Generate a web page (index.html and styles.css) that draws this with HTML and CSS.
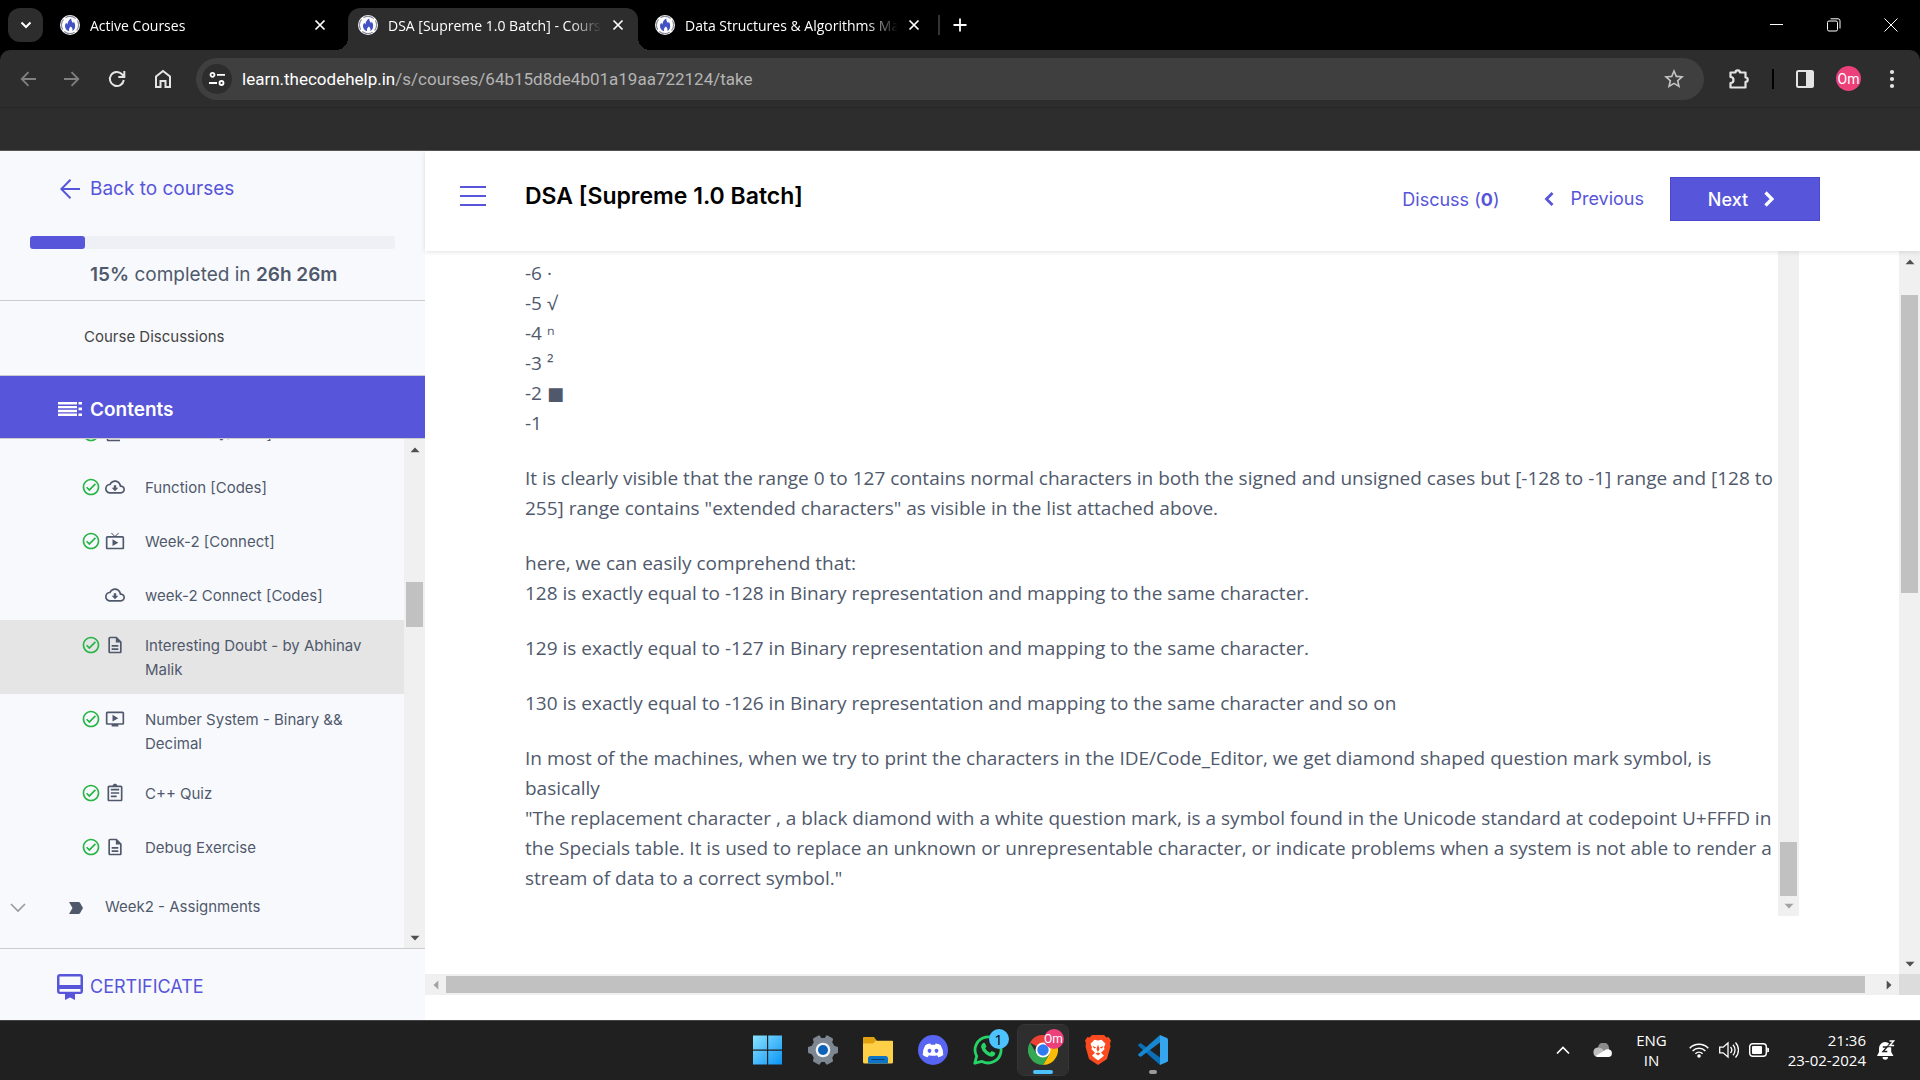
FILE: index.html
```html
<!DOCTYPE html>
<html lang="en">
<head>
<meta charset="utf-8">
<title>DSA [Supreme 1.0 Batch] - Course</title>
<link rel="stylesheet" href="styles.css">
</head>
<body>
<svg class="defs" aria-hidden="true">
  <symbol id="flame" viewBox="0 0 20 20"><circle cx="10" cy="10" r="10" fill="#fff"/><circle cx="10" cy="10" r="8.6" fill="none" stroke="#8a8d9c" stroke-width="1.2" stroke-dasharray="11 2.500" stroke-dashoffset="5"/><path d="M11.300 3.500c-.2 2.400 1 3.200 1.700 4.600.5-.4.700-1 .6-1.700 1.600 2 2 4.600 1.200 6.800-.5 1.300-1.300 2.300-2.400 2.900.5-1.600 0-3-1.600-4.500-1.600 1.300-2.300 2.800-1.700 4.700-2.500-.8-4.300-3-4.100-5.500.1-1.300.7-2.300 1.500-3 .1.800.4 1.300.9 1.700.1-2.600 1.500-4.800 3.900-6z" fill="#4252c4"/></symbol>
  <symbol id="x" viewBox="0 0 12 12"><path d="M1.500 1.500l9 9M10.500 1.500l-9 9" stroke="currentColor" stroke-width="1.700" fill="none"/></symbol>
  <symbol id="check" viewBox="0 0 24 24"><path fill="#28b446" d="M16.590 7.580L10 14.170l-2.590-2.580L6 13l4 4 8-8zM12 2C6.480 2 2 6.480 2 12s4.480 10 10 10 10-4.480 10-10S17.520 2 12 2zm0 18c-4.420 0-8-3.580-8-8s3.580-8 8-8 8 3.580 8 8-3.580 8-8 8z"/></symbol>
  <symbol id="cloud" viewBox="0 0 24 24"><path fill="currentColor" d="M19.350 10.040C18.670 6.590 15.640 4 12 4 9.110 4 6.600 5.640 5.350 8.040 2.340 8.360 0 10.910 0 14c0 3.310 2.690 6 6 6h13c2.760 0 5-2.240 5-5 0-2.640-2.050-4.780-4.650-4.960zM19 18H6c-2.210 0-4-1.790-4-4 0-2.050 1.530-3.760 3.560-3.970l1.070-.11.5-.95C8.080 7.140 9.940 6 12 6c2.620 0 4.880 1.860 5.390 4.430l.3 1.500 1.530.11c1.560.1 2.780 1.410 2.780 2.960 0 1.650-1.350 3-3 3zm-5.550-8h-2.900v3H8l4 4 4-4h-2.550z"/></symbol>
  <symbol id="live" viewBox="0 0 24 24"><path fill="currentColor" d="M21 6h-7.590l3.290-3.290L16 2l-4 4-4-4-.7.710L10.590 6H3c-1.100 0-2 .89-2 2v12c0 1.100.9 2 2 2h18c1.100 0 2-.9 2-2V8c0-1.110-.9-2-2-2zm0 14H3V8h18v12zM9 10v8l7-4z"/></symbol>
  <symbol id="video" viewBox="0 0 24 24"><path fill="currentColor" d="M21 3H3c-1.110 0-2 .89-2 2v12c0 1.100.89 2 2 2h5v2h8v-2h5c1.100 0 2-.9 2-2V5c0-1.110-.9-2-2-2zm0 14H3V5h18v12zm-5-6l-7 4V7z"/></symbol>
  <symbol id="doc" viewBox="0 0 24 24"><path fill="currentColor" d="M8 16h8v2H8zm0-4h8v2H8zm6-10H6c-1.100 0-2 .9-2 2v16c0 1.100.89 2 1.990 2H18c1.100 0 2-.9 2-2V8l-6-6zm4 18H6V4h7v5h5v11z"/></symbol>
  <symbol id="slides" viewBox="0 0 24 24"><path fill="currentColor" d="M20 2H8c-1.100 0-2 .9-2 2v12c0 1.100.9 2 2 2h12c1.100 0 2-.9 2-2V4c0-1.100-.9-2-2-2zm0 14H8V4h12v12zM4 6H2v14c0 1.100.9 2 2 2h14v-2H4V6z"/></symbol>
  <symbol id="quiz" viewBox="0 0 24 24"><path fill="currentColor" d="M7 15h7v2H7zm0-4h10v2H7zm0-4h10v2H7zm12-4h-4.180C14.400 1.840 13.300 1 12 1s-2.400.84-2.820 2H5c-1.100 0-2 .9-2 2v15c0 1.100.9 2 2 2h14c1.100 0 2-.9 2-2V5c0-1.100-.9-2-2-2zm0 17H5V5h14v15z"/></symbol>
  <symbol id="tri" viewBox="0 0 10 6"><path fill="currentColor" d="M5 0.500l4.500 4.800h-9z"/></symbol>
</svg>

<header class="browser">
  <div class="tabstrip">
    <button class="tabsearch" aria-label="Search tabs"><svg width="12" height="8" viewBox="0 0 12 8"><path d="M1.500 1.500L6 6l4.500-4.500" fill="none" stroke="#fff" stroke-width="2"/></svg></button>
    <div class="tab"><svg class="fav"><use href="#flame"/></svg><span class="tabname">Active Courses</span><button aria-label="Close tab"><svg class="tabx"><use href="#x"/></svg></button></div>
    <div class="tab active"><svg class="fav"><use href="#flame"/></svg><span class="tabname">DSA [Supreme 1.0 Batch] - Course</span><button aria-label="Close tab"><svg class="tabx"><use href="#x"/></svg></button></div>
    <div class="tab"><svg class="fav"><use href="#flame"/></svg><span class="tabname">Data Structures &amp; Algorithms Mastery</span><button aria-label="Close tab"><svg class="tabx"><use href="#x"/></svg></button></div>
    <span class="tabsep"></span>
    <button class="newtab" aria-label="New tab"><svg width="14" height="14" viewBox="0 0 14 14"><path d="M7 0.500v13M0.500 7h13" stroke="#fff" stroke-width="1.800"/></svg></button>
    <div class="winctl">
      <button aria-label="Minimise"><svg width="14" height="14" viewBox="0 0 14 14"><path d="M0 6.500h13" stroke="#fff"/></svg></button>
      <button aria-label="Restore"><svg width="14" height="14" viewBox="0 0 14 14" fill="none" stroke="#fff"><rect x="0.500" y="3" width="10" height="10" rx="1.500"/><path d="M3.500 0.800h7.500q2 0 2 2V10.500"/></svg></button>
      <button aria-label="Close"><svg width="14" height="14" viewBox="0 0 14 14"><path d="M0.500 0.500l13 13M13.500 0.500l-13 13" stroke="#fff"/></svg></button>
    </div>
  </div>
  <div class="toolbar">
    <button class="dim" aria-label="Back"><svg width="16" height="16" viewBox="0 0 16 16" fill="none" stroke="currentColor" stroke-width="1.800"><path d="M16 8H2M8.500 1.200L1.700 8l6.800 6.800"/></svg></button>
    <button class="dim" aria-label="Forward"><svg width="16" height="16" viewBox="0 0 16 16" fill="none" stroke="currentColor" stroke-width="1.800"><path d="M0 8h14M7.500 1.200L14.300 8l-6.800 6.800"/></svg></button>
    <button aria-label="Reload"><svg width="18" height="18" viewBox="0 0 18 18" fill="none" stroke="currentColor" stroke-width="2"><path d="M15.800 10A7 7 0 1 1 14 4.200L16 6.200M16.300 1v6h-6"/></svg></button>
    <button aria-label="Home"><svg width="18" height="20" viewBox="0 0 18 20" fill="none" stroke="currentColor" stroke-width="2"><path d="M2 7.500L9 2l7 5.500V18h-4.500v-6h-5v6H2z"/></svg></button>
    <div class="omnibox">
      <button class="site" aria-label="Site information"><svg width="16" height="16" viewBox="0 0 16 16" fill="none" stroke="#fff" stroke-width="1.800"><circle cx="3.500" cy="3.800" r="2"/><path d="M8 3.800h8M0 12h8"/><circle cx="12.500" cy="12" r="2"/></svg></button>
      <span class="url" role="textbox" aria-label="Address"><b>learn.thecodehelp.in</b>/s/courses/64b15d8de4b01a19aa722124/take</span>
      <button class="star" aria-label="Bookmark"><svg width="20" height="20" viewBox="2 2 20 20"><path fill="currentColor" d="M22 9.240l-7.190-.62L12 2 9.190 8.630 2 9.240l5.460 4.730L5.820 21 12 17.270 18.180 21l-1.630-7.030L22 9.240zM12 15.400l-3.760 2.270 1-4.280-3.320-2.880 4.380-.38L12 6.100l1.710 4.040 4.380.38-3.320 2.880 1 4.280L12 15.400z"/></svg></button>
    </div>
    <div class="exts">
      <button aria-label="Extensions"><svg width="22" height="22" viewBox="0 0 22 22"><path d="M2.500 4.500h5a2.200 2.200 0 0 1 4.400 0h5.600v5a2.200 2.200 0 0 1 0 4.400V19.500H2.500v-4.500a3 3 0 0 0 0-6z" fill="none" stroke="currentColor" stroke-width="2.200" stroke-linejoin="round"/></svg></button>
      <span class="extsep"></span>
      <button aria-label="Side panel"><svg width="18" height="18" viewBox="0 0 18 18"><rect x="1" y="1" width="16" height="16" rx="1.500" fill="none" stroke="currentColor" stroke-width="2"/><path fill="currentColor" d="M10 1h7v16h-7z"/></svg></button>
      <button class="avatar">Om</button>
      <button class="menu" aria-label="Menu"><svg width="6" height="20" viewBox="0 0 6 20" fill="currentColor"><circle cx="3" cy="3" r="2.100"/><circle cx="3" cy="10" r="2.100"/><circle cx="3" cy="17" r="2.100"/></svg></button>
    </div>
  </div>
  <div class="bookmarks"></div>
</header>

<div class="page">
  <aside class="sidebar">
    <div class="progress">
      <a class="back" href="#"><svg width="20" height="20" viewBox="0 0 20 20" fill="none" stroke="currentColor" stroke-width="2"><path d="M20 10H1.500M10.500 0.800L1.300 10l9.200 9.200"/></svg>Back to courses</a>
      <div class="bar"><div class="fill" style="width:15%"></div></div>
      <p class="done"><b>15%</b> completed in <b>26h 26m</b></p>
    </div>
    <a class="disc" href="#">Course Discussions</a>
    <h2 class="contents"><svg width="24" height="14" viewBox="0 0 24 14" fill="#fff"><path d="M0 0h19v2.400H0zM0 3.900h19v2.400H0zM0 7.800h19v2.400H0zM0 11.600h19V14H0zM20.500 0H24v2.600h-3.500zM20.500 5.500H24v2.800h-3.500zM20.500 11.400H24V14h-3.500z"/></svg>Contents</h2>
    <div class="listwrap">
      <ul class="list">
        <li><svg><use href="#check"/></svg><svg><use href="#slides"/></svg><a href="#">Functions [Slides]</a></li>
        <li><svg><use href="#check"/></svg><svg><use href="#cloud"/></svg><a href="#">Function [Codes]</a></li>
        <li><svg><use href="#check"/></svg><svg><use href="#live"/></svg><a href="#">Week-2 [Connect]</a></li>
        <li class="todo"><span></span><svg><use href="#cloud"/></svg><a href="#">week-2 Connect [Codes]</a></li>
        <li class="current"><svg><use href="#check"/></svg><svg><use href="#doc"/></svg><a href="#">Interesting Doubt - by Abhinav Malik</a></li>
        <li><svg><use href="#check"/></svg><svg><use href="#video"/></svg><a href="#">Number System - Binary &amp;&amp; Decimal</a></li>
        <li><svg><use href="#check"/></svg><svg><use href="#quiz"/></svg><a href="#">C++ Quiz</a></li>
        <li><svg><use href="#check"/></svg><svg><use href="#doc"/></svg><a href="#">Debug Exercise</a></li>
        <li class="section"><svg width="16" height="10" viewBox="0 0 16 10"><path d="M1 1l7 7 7-7" fill="none" stroke="#9a9a9a" stroke-width="1.600"/></svg><svg width="14" height="12" viewBox="0 0 14 12"><path d="M0 0h9.500q1 0 1.500.8L14 6l-3 5.200q-.5.800-1.500.8H0l3.500-6z" fill="currentColor"/></svg><a href="#">Week2 - Assignments</a></li>
      </ul>
      <div class="vbar listbar"><svg class="arr"><use href="#tri"/></svg><i></i><svg class="arr down"><use href="#tri"/></svg></div>
    </div>
    <a class="cert" href="#"><svg width="26" height="26" viewBox="0 0 26 26"><path fill="currentColor" fill-rule="evenodd" d="M3 0h20a3 3 0 0 1 3 3v14a3 3 0 0 1-3 3h-5v6l-5-2.500L8 26v-6H3a3 3 0 0 1-3-3V3a3 3 0 0 1 3-3zM2.500 2.500v8.500h21V2.500zM2.500 15v2.800h21V15z"/></svg>CERTIFICATE</a>
  </aside>

  <main class="main">
    <div class="head">
      <button class="burger" aria-label="Toggle menu"><i></i><i></i><i></i></button>
      <h1>DSA [Supreme 1.0 Batch]</h1>
      <a class="discuss" href="#">Discuss (<b>0</b>)</a>
      <a class="prev" href="#"><svg width="10" height="14" viewBox="0 0 10 14"><path d="M8.500 1L2.500 7l6 6" fill="none" stroke="currentColor" stroke-width="2.800"/></svg>Previous</a>
      <button class="next">Next<svg width="10" height="16" viewBox="0 0 10 16"><path d="M1.500 1.500L8 8l-6.500 6.500" fill="none" stroke="currentColor" stroke-width="3.200"/></svg></button>
    </div>
    <div class="frame">
      <div class="view">
        <article class="article">
          <p>-6 ·<br>-5 √<br>-4 ⁿ<br>-3 ²<br>-2 <span class="block">■</span><br>-1</p>
          <p>It is clearly visible that the range 0 to 127 contains normal characters in both the signed and unsigned cases but [-128 to -1] range and [128 to 255] range contains "extended characters" as visible in the list attached above.</p>
          <p>here, we can easily comprehend that:<br>128 is exactly equal to -128 in Binary representation and mapping to the same character.</p>
          <p>129 is exactly equal to -127 in Binary representation and mapping to the same character.</p>
          <p>130 is exactly equal to -126 in Binary representation and mapping to the same character and so on</p>
          <p>In most of the machines, when we try to print the characters in the IDE/Code_Editor, we get diamond shaped question mark symbol, is basically<br>"The replacement character , a black diamond with a white question mark, is a symbol found in the Unicode standard at codepoint U+FFFD in the Specials table. It is used to replace an unknown or unrepresentable character, or indicate problems when a system is not able to render a stream of data to a correct symbol."</p>
        </article>
        <div class="vbar innerbar"><i></i><svg class="arr down grey"><use href="#tri"/></svg></div>
      </div>
      <div class="vbar outerbar"><svg class="arr"><use href="#tri"/></svg><i></i><svg class="arr down"><use href="#tri"/></svg></div>
      <div class="hbar"><svg class="arr left grey"><use href="#tri"/></svg><i></i><svg class="arr right"><use href="#tri"/></svg></div>
      <div class="corner"></div>
    </div>
  </main>
</div>

<footer class="taskbar">
  <span></span>
  <nav class="apps">
    <button aria-label="Start"><svg width="30" height="30" viewBox="0 0 30 30"><defs><linearGradient id="w" x1="0" y1="0" x2="1" y2="1"><stop offset="0" stop-color="#8be3ff"/><stop offset="1" stop-color="#0a94f5"/></linearGradient></defs><path fill="url(#w)" d="M0 0.500h14v14H0zM15.200 0.500H29v14H15.200zM0 15.700h14V29.500H0zM15.200 15.700H29V29.500H15.200z"/></svg></button>
    <button aria-label="Settings"><svg width="30" height="30" viewBox="0 0 30 30"><path fill="#7d8791" stroke="#7d8791" stroke-width="2" stroke-linejoin="round" d="M12.800 4l-1.800-2.600L6 4.200l.8 3.300-2.500 4.300L1 12.800v4.400l3.300 1L6.800 22.500 6 25.800l5 2.800L12.800 26h4.400l1.800 2.600 5-2.800-.8-3.300 2.500-4.300 3.300-1v-4.400l-3.300-1-2.500-4.300.8-3.300-5-2.800L17.200 4z"/><circle cx="15" cy="15" r="7.300" fill="#f2f4f6"/><circle cx="15" cy="15" r="5" fill="#0c62b8"/></svg></button>
    <button aria-label="File Explorer"><svg width="30" height="28" viewBox="0 0 30 28"><path fill="#e0a010" d="M0 2q0-1 1-1h10l3 4H30v5H0z"/><path fill="#ffcf48" d="M0 7.500h10l3-2.800h16q1 0 1 1V26q0 1.500-1.500 1.500h-27Q0 27.500 0 26z"/><path fill="#0d74c8" d="M5 27.500v-5q0-2.500 2.500-2.500h15q2.500 0 2.500 2.500v5z"/><path stroke="#083f75" d="M8.500 23.500h13"/></svg></button>
    <button aria-label="Discord"><svg width="30" height="30" viewBox="0 0 30 30"><circle cx="15" cy="15" r="15" fill="#5865f2"/><path fill="#fff" d="M12.300 8.500q-3 .3-5 1.800-2.800 4.700-2.600 9.700 2.500 2 5 2.300l1.200-2q4.100 1 8.200 0l1.200 2q2.500-.4 5-2.300.2-5-2.600-9.700-2-1.500-5-1.800l-.7 1.300h-4z"/><ellipse cx="11.500" cy="15.800" rx="1.900" ry="2.100" fill="#5865f2"/><ellipse cx="18.500" cy="15.800" rx="1.900" ry="2.100" fill="#5865f2"/></svg></button>
    <button class="badged" aria-label="WhatsApp"><svg width="30" height="30" viewBox="0 0 30 30"><path d="M1.800 28.200l1.900-7A13 13 0 1 1 9 26.400z" fill="#202020" stroke="#25d366" stroke-width="2.800" stroke-linejoin="round"/><path fill="#25d366" d="M9.500 8.500q1-1 2.300-.5l1.700 3.500-1.300 1.800q1.500 3 4.800 4.500l1.800-1.700 3.500 1.700q0 3-2.800 3.800-3 .5-6.500-2.300-4.200-3.300-4.900-7-.1-2.500 1.400-3.800z"/></svg><b class="count">1</b></button>
    <button class="badged open" aria-label="Chrome"><svg width="30" height="30" viewBox="0 0 30 30"><path fill="#ea4335" d="M15 15L2 7.500A15 15 0 0 1 28 7.500H15z"/><path fill="#fbbc05" d="M28 7.500A15 15 0 0 1 15 30L21.500 18.700 15 7.500z"/><path fill="#34a853" d="M2 7.500A15 15 0 0 0 15 30l6.500-11.300H8.500z"/><circle cx="15" cy="15" r="7.500" fill="#fff"/><circle cx="15" cy="15" r="5.700" fill="#2f7bf0"/></svg><b class="profile">Om</b></button>
    <button aria-label="Brave"><svg width="26" height="30" viewBox="0 0 26 30"><path fill="#fb4a1f" d="M7 0h12l2.500 2.500 2-.5L26 5.500l-1 3 .5 3L22 24l-9 6-9-6L.5 11.500l.5-3-1-3L2.500 2l2 .5z"/><path fill="#fff" d="M13 5.500l3.500-.8 4 4-1.500 3.500.5 2-3.500 3.500 3 3L13 25.500 7 20.700l3-3-3.500-3.500.5-2L5.500 8.700l4-4z"/><path fill="#fb4a1f" d="M13 9.500l1.500 4.500-1.500 3-1.500-3zM7.500 11l4 1.500-2.500 1zM18.500 11l-4 1.500 2.500 1zM10.500 18.500l2.500-1 2.500 1-2.500 2z"/></svg></button>
    <button class="running" aria-label="Visual Studio Code"><svg width="30" height="30" viewBox="0 0 30 30"><path fill="#0a6fb8" d="M2.500 8L22 22.500V30L0.500 11q-.6-.8 0-1.500z"/><path fill="#1787d0" d="M2.500 22L22 7.500V0L0.500 19q-.6.800 0 1.500z"/><path fill="#35a5ee" d="M22 0l7 3q1 .5 1 1.500v21q0 1-1 1.500l-7 3z"/></svg></button>
  </nav>
  <div class="tray">
    <button aria-label="Hidden icons"><svg width="14" height="9" viewBox="0 0 14 9"><path d="M1 7.500l6-6 6 6" fill="none" stroke="#fff" stroke-width="1.700"/></svg></button>
    <svg class="onedrive" width="20" height="14" viewBox="0 0 20 14"><path fill="#8b8b8b" d="M5 5a5.500 5.500 0 0 1 11 0v5H5z"/><path fill="#bdbdbd" d="M4.500 4.500q2.500-.5 5 1.500l3 5-8 3A4.800 4.800 0 0 1 4.500 4.500z"/><path fill="#fff" d="M2.500 13l9-5.500q1.500-1.500 4-1.300a4 4 0 0 1 .5 7.800H4.500z"/></svg>
    <div class="lang">ENG<br>IN</div>
    <div class="status">
      <svg width="20" height="16" viewBox="0 0 20 16" fill="none" stroke="#fff" stroke-width="1.500"><path d="M0.700 6.200a13 13 0 0 1 18.600 0M3.600 9a9 9 0 0 1 12.800 0M6.400 11.800a5.200 5.200 0 0 1 7.200 0"/><circle cx="10" cy="14" r="1.800" fill="#fff" stroke="none"/></svg>
      <svg width="20" height="18" viewBox="0 0 20 18" fill="none" stroke="#fff" stroke-width="1.300"><path d="M0.700 6.200h3.500L9 2v14l-4.800-4.200H.7zM11.500 6a4.500 4.500 0 0 1 0 6M14 3.700a8 8 0 0 1 0 10.600M16.500 1.500a11 11 0 0 1 0 15"/></svg>
      <svg width="20" height="14" viewBox="0 0 20 14"><rect x="0.700" y="0.700" width="16.600" height="12.600" rx="3" fill="none" stroke="#fff" stroke-width="1.400"/><rect x="3" y="3" width="10" height="8" rx="1" fill="#fff"/><path d="M18.200 4.500L20 5.300v3.400l-1.800.8z" fill="#fff"/></svg>
    </div>
    <div class="clock">21:36<br>23-02-2024</div>
    <svg width="18" height="20" viewBox="0 0 18 20"><path fill="#fff" d="M8 2a6.200 6.200 0 0 1 6.200 6.200V12L16.500 16H0l2-4V8.200A6.200 6.200 0 0 1 8 2zM5.500 17h5.500a2.700 2.700 0 0 1-5.500 0z"/><path d="M5.800 7h4.200L6 11.500h4.300" fill="none" stroke="#202020" stroke-width="1.400"/><path d="M12.500 1h4.200L12.800 5.500h4.300" fill="none" stroke="#202020" stroke-width="3.500"/><path d="M12.500 1h4.200L12.800 5.500h4.300" fill="none" stroke="#fff" stroke-width="1.400"/></svg>
  </div>
</footer>
</body>
</html>
```
FILE: styles.css
```css
:root {
  --accent: #5755d9;
  --ink: #50596c;
  --chrome: #2d2d2d;
}
* { box-sizing: border-box; }
body {
  margin: 0;
  height: 100vh;
  display: flex;
  flex-direction: column;
  overflow: hidden;
  font-family: Inter, "Liberation Sans", sans-serif;
  color: var(--ink);
  background: #fff;
}
h1, h2, p, ul { margin: 0; padding: 0; }
a { color: inherit; text-decoration: none; }
button {
  border: 0;
  padding: 0;
  background: none;
  color: inherit;
  font: inherit;
  display: flex;
  align-items: center;
  justify-content: center;
}
svg { flex: none; display: block; }
.defs { position: absolute; width: 0; height: 0; }

/* browser window */
.browser {
  flex: none;
  background: #000;
  color: #e4e4e4;
  font-family: "Open Sans", "Noto Sans", sans-serif;
}
.tabstrip { height: 50px; display: flex; align-items: stretch; }
.tabsearch {
  width: 35px;
  height: 34px;
  margin: 8px 7px 0 8px;
  border-radius: 12px;
  background: var(--chrome);
}
.tab {
  position: relative;
  width: 298px;
  height: 42px;
  margin-top: 8px;
  padding: 0 22px 8px 10px;
  display: flex;
  align-items: center;
  gap: 10px;
  color: #fff;
  font-size: 14px;
}
.tab.active {
  width: 290px;
  margin-right: 7px;
  padding-right: 14px;
  border-radius: 12px 12px 0 0;
  background: var(--chrome);
}
.tab.active::before, .tab.active::after {
  content: "";
  position: absolute;
  bottom: 0;
  width: 12px;
  height: 12px;
}
.tab.active::before { right: 100%; background: radial-gradient(circle at 0 0, #000 12px, var(--chrome) 12px); }
.tab.active::after { left: 100%; background: radial-gradient(circle at 100% 0, #000 12px, var(--chrome) 12px); }
.tab.active + .tab { width: 286px; padding-right: 11px; }
.fav { width: 20px; height: 20px; }
.tabname {
  flex: 1;
  overflow: hidden;
  white-space: nowrap;
  mask-image: linear-gradient(to right, #000 85%, transparent);
}
.tabx { width: 12px; height: 12px; }
.tabsep { width: 2px; height: 20px; margin: 15px 13px 0 7px; background: #333; }
.newtab { width: 14px; }
.winctl { margin-left: auto; padding-right: 22px; display: flex; gap: 43px; }
.toolbar {
  height: 58px;
  padding: 0 25px 0 20px;
  display: flex;
  align-items: center;
  gap: 28px;
  border-bottom: 1px solid #262626;
  border-radius: 10px 10px 0 0;
  background: var(--chrome);
}
.dim { color: #808080; }
.omnibox {
  flex: 1;
  height: 42px;
  margin-left: -4px;
  padding: 0 20px 0 6px;
  display: flex;
  align-items: center;
  border-radius: 21px;
  background: #3f3f3f;
}
.site { width: 30px; height: 30px; border-radius: 50%; background: var(--chrome); }
.url { flex: 1; margin-left: 10px; font: 17px Roboto, sans-serif; color: #b4b4b4; }
.url b { font-weight: 400; color: #fff; }
.star { color: #c4c4c4; }
.exts { display: flex; align-items: center; gap: 22px; margin-left: -4px; }
.extsep { width: 2px; height: 20px; background: #000; }
.menu { margin-left: 6px; }
.avatar {
  width: 25px;
  height: 25px;
  border-radius: 50%;
  background: #ec407a;
  color: #fff;
  font: 14px Roboto, sans-serif;
}
.bookmarks { height: 43px; background: var(--chrome); border-bottom: 1px solid #555; }

/* course page */
.page { flex: 1; min-height: 0; display: flex; }
.sidebar {
  flex: none;
  width: 425px;
  display: flex;
  flex-direction: column;
  background: #f8f9fc;
}
.progress { padding: 25px 30px 12px; border-bottom: 1px solid #ccc; }
.back {
  display: flex;
  align-items: center;
  gap: 10px;
  margin-left: 30px;
  font-size: 19px;
  line-height: 26px;
  color: var(--accent);
}
.bar { height: 13px; margin: 34px 0 12px; border-radius: 3px; background: #eef0f5; }
.fill { height: 100%; border-radius: 3px; background: var(--accent); }
.done { margin-left: 60px; font-size: 19px; line-height: 27px; }
.done b { font-weight: 600; }
.disc {
  padding: 0 0 2px 84px;
  font-size: 15px;
  line-height: 72px;
  color: #444;
  border-bottom: 1px solid #ccc;
}
.contents {
  display: flex;
  align-items: center;
  gap: 8px;
  padding: 4px 0 0 58px;
  height: 63px;
  font-size: 19px;
  font-weight: 600;
  color: #fff;
  background: var(--accent);
  border-bottom: 1px solid #ccc;
}
.listwrap { flex: 1; min-height: 0; display: flex; border-bottom: 1px solid #ccc; }
.list { flex: 1; overflow: hidden; list-style: none; font-size: 15px; line-height: 24px; }
.list li {
  display: grid;
  grid-template-columns: 20px 20px 1fr;
  align-items: start;
  gap: 4px;
  min-height: 54px;
  padding: 14px 20px 12px 81px;
}
.list li:first-child { margin-top: -31px; }
.list li.todo { min-height: 50px; }
.list li.current { background: #e5e5e5; }
.list li svg { width: 20px; height: 20px; margin-top: 1px; }
.list li a { margin-left: 16px; }
.list li.section {
  grid-template-columns: 16px 14px 1fr;
  column-gap: 43px;
  align-items: center;
  padding: 19px 20px 11px 10px;
}
.list li.section svg { width: auto; height: auto; margin: 2px 0 0; }
.list li.section a { margin-left: -21px; }
.cert {
  display: flex;
  align-items: center;
  gap: 7px;
  height: 71px;
  padding: 4px 0 0 57px;
  font-size: 18px;
  color: var(--accent);
}

.main { flex: 1; min-width: 0; display: flex; flex-direction: column; }
.head {
  position: relative;
  z-index: 1;
  flex: none;
  height: 100px;
  padding: 0 100px 10px 35px;
  display: flex;
  align-items: center;
  background: #fff;
  box-shadow: 0 1px 5px rgba(0, 0, 0, .12);
  color: var(--accent);
  font-size: 18px;
}
.burger { width: 26px; flex-direction: column; gap: 7px; }
.burger i { width: 26px; height: 2px; background: var(--accent); }
.head h1 { margin: 0 auto 0 39px; font-size: 23px; font-weight: 600; color: #000; }
.discuss { margin: 6px 45px 0 0; }
.prev { display: flex; align-items: center; gap: 16px; margin: 5px 26px 0 0; }
.next {
  width: 150px;
  height: 44px;
  margin-top: 6px;
  padding-right: 8px;
  gap: 16px;
  border: 1px solid #4a48cc;
  background: var(--accent);
  color: #fff;
  font-weight: 500;
}
.frame {
  flex: 1;
  min-height: 0;
  margin-bottom: 25px;
  display: grid;
  grid-template: 1fr 21px / 1fr 21px;
}
.view { min-height: 0; display: flex; align-items: flex-start; margin: 0 100px 58px; }
.article {
  flex: 1;
  padding: 7px 0 23px;
  font: 19px/30px "Open Sans", "Noto Sans", sans-serif;
}
.article p + p { margin-top: 25px; }
.block { font: 18px/20px "DejaVu Sans", sans-serif; }

/* scroll bars */
.vbar, .hbar { display: grid; background: #f0f0f0; justify-items: center; align-items: center; }
.vbar { width: 21px; }
.vbar i { width: 17px; height: 100%; background: #c1c1c1; }
.hbar i { width: 100%; height: 17px; background: #c1c1c1; }
.arr { width: 10px; height: 6px; color: #505050; }
.grey { color: #a3a3a3; }
.down { transform: rotate(180deg); }
.left { transform: rotate(-90deg); }
.right { transform: rotate(90deg); }
.listbar { grid-template-rows: 21px 122fr 45fr 300fr 21px; }
.listbar i { grid-row: 3; }
.listbar .down { grid-row: 5; }
.innerbar { align-self: stretch; grid-template-rows: 591fr 54fr 20px; }
.innerbar i { grid-row: 2; }
.innerbar .down { grid-row: 3; }
.outerbar { grid-template-rows: 21px 23fr 298fr 360fr 21px; }
.outerbar i { grid-row: 3; }
.outerbar .down { grid-row: 5; }
.hbar { grid-template-columns: 21px 1419fr 13fr 21px; }
.hbar .right { grid-column: 4; }
.corner { background: #dcdcdc; }

/* task bar */
.taskbar {
  flex: none;
  height: 60px;
  display: grid;
  grid-template-columns: 1fr auto 1fr;
  align-items: center;
  padding-bottom: 1px;
  border-top: 1px solid #444;
  background: #202020;
  color: #fff;
  font: 15px/20px "Open Sans", "Noto Sans", sans-serif;
}
.apps { display: flex; gap: 5px; }
.apps button { position: relative; width: 50px; height: 50px; }
.apps .open { background: #2e2e2e; border-radius: 6px; outline: 1px solid #363636; }
.open::after, .running::after {
  content: "";
  position: absolute;
  bottom: 1px;
  width: 20px;
  height: 4px;
  border-radius: 2px;
  background: #4cc2ff;
}
.running::after { width: 8px; background: #9a9a9a; }
.count, .profile {
  position: absolute;
  top: 4px;
  right: 4px;
  width: 20px;
  height: 20px;
  border-radius: 50%;
  text-align: center;
  font-weight: 400;
}
.count { background: #4cc2ff; color: #000; }
.profile { background: #ec407a; font: 12px/20px Roboto, sans-serif; }
.tray { justify-self: end; display: flex; align-items: center; padding-right: 25px; }
.onedrive { margin-left: 23px; }
.lang { margin: 0 22px 0 23px; text-align: center; }
.status { display: flex; align-items: center; gap: 10px; }
.clock { margin: 0 11px 0 19px; text-align: right; }
```
